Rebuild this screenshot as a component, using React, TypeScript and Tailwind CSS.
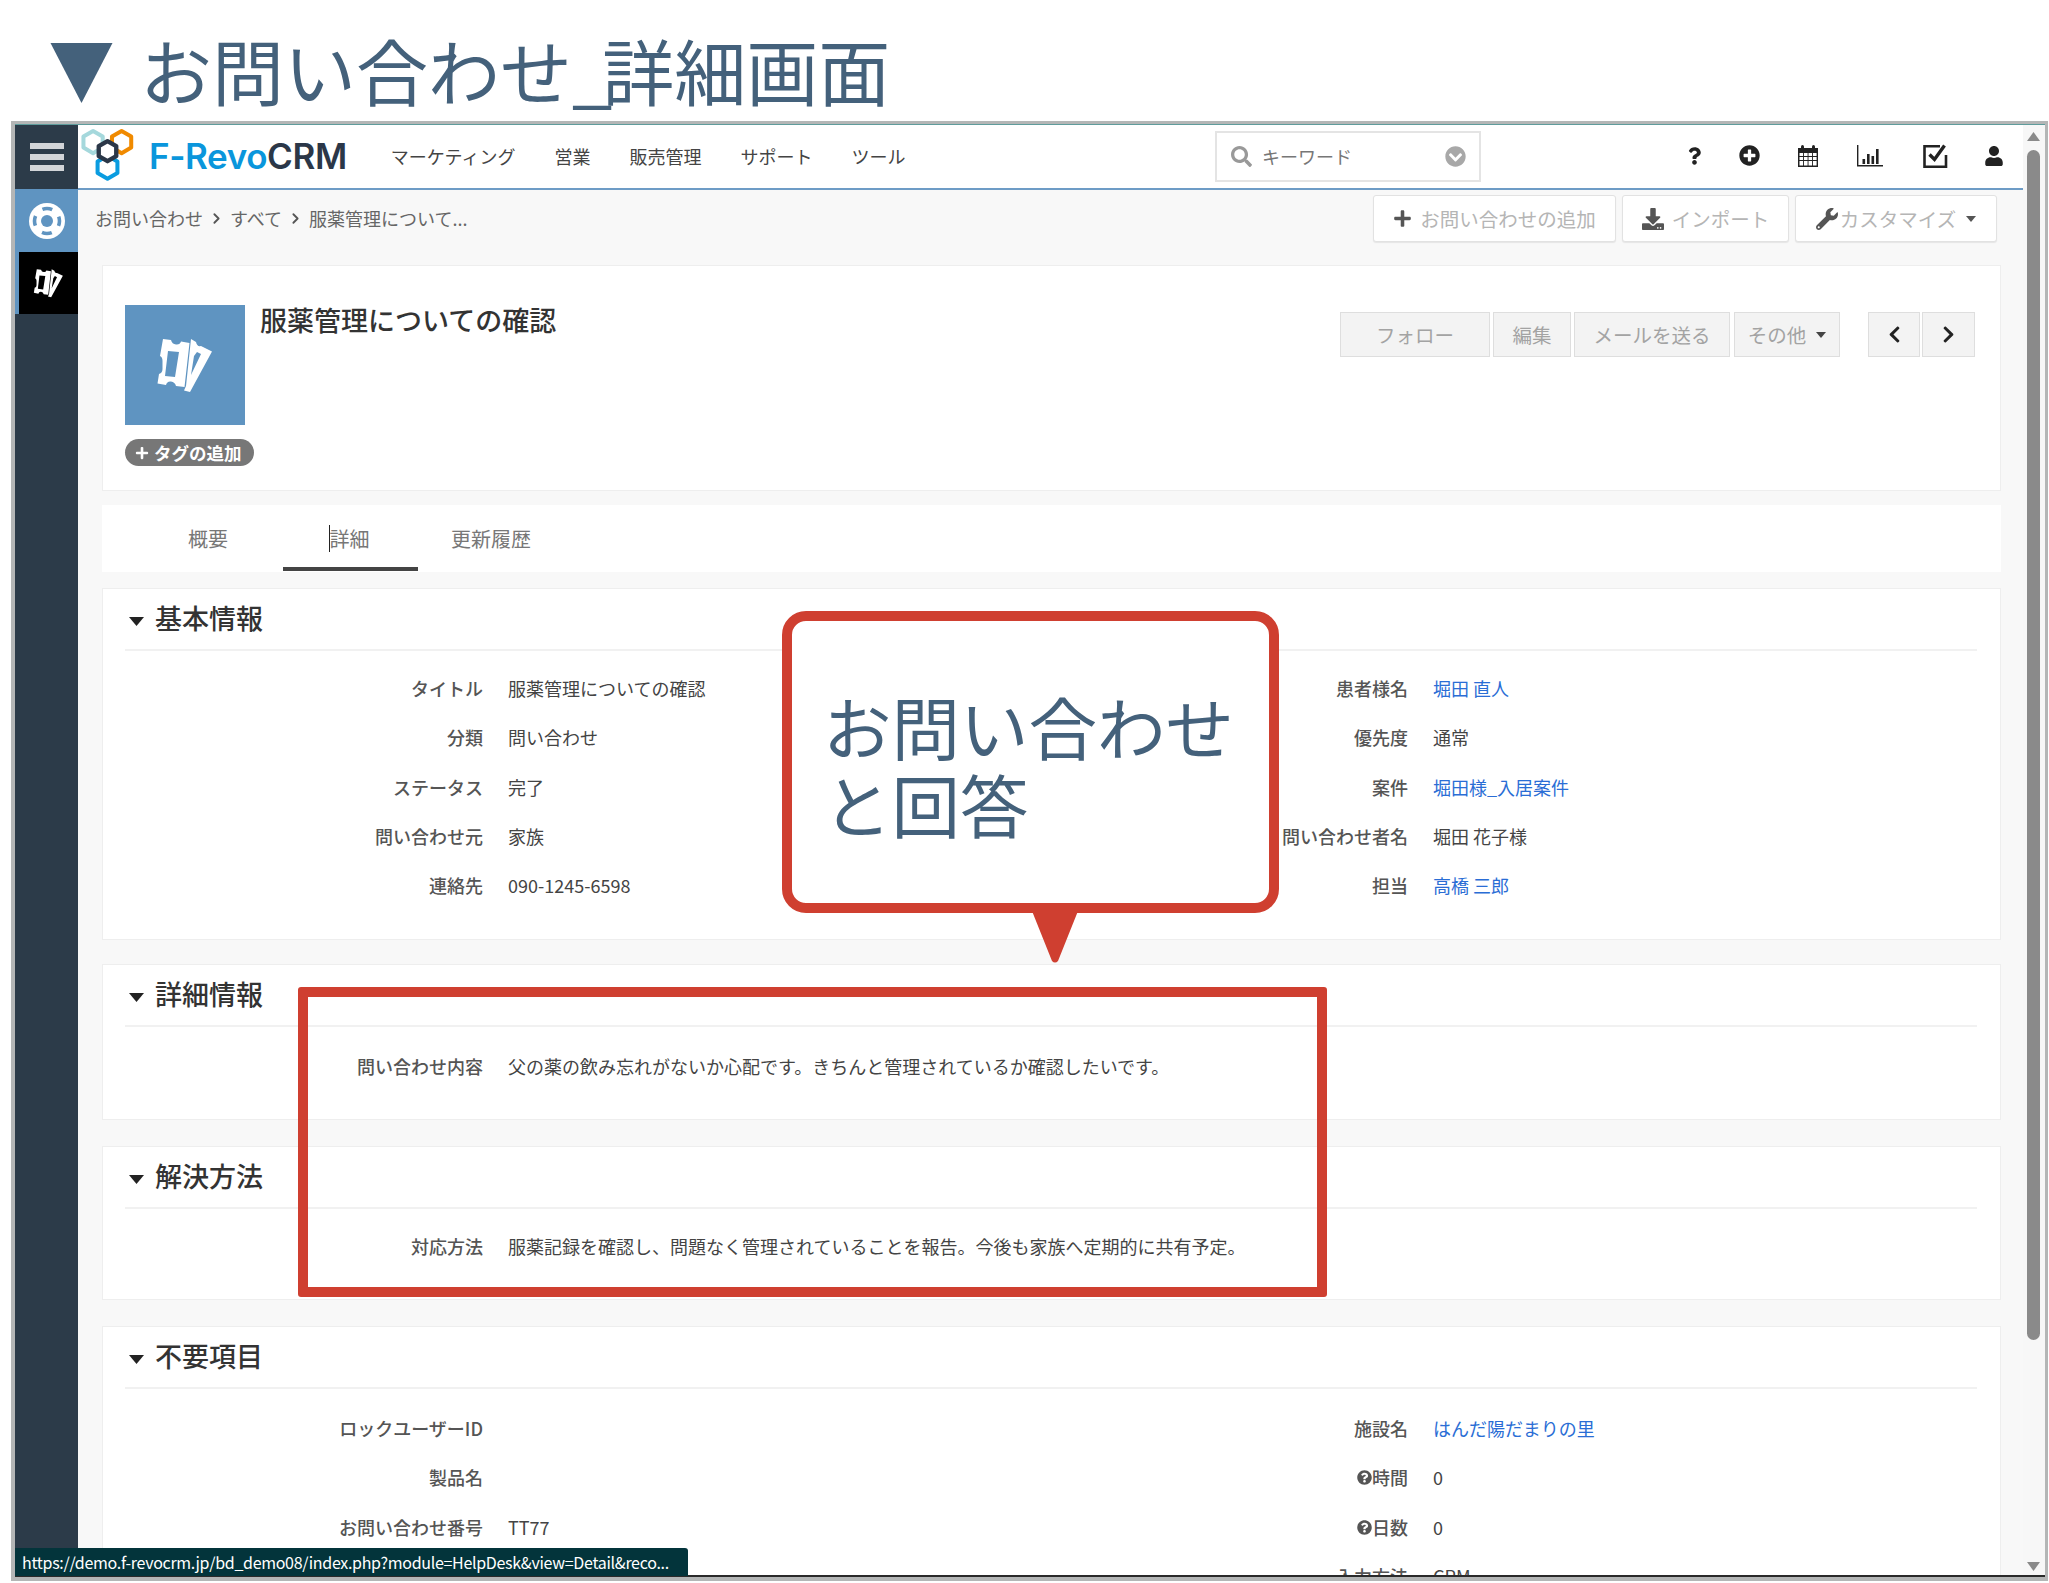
import type { ReactNode } from 'react';
import {
  FaChevronCircleDown,
  FaChevronLeft,
  FaChevronRight,
  FaDownload,
  FaPlus,
  FaPlusCircle,
  FaQuestion,
  FaQuestionCircle,
  FaSearch,
  FaUser,
  FaWrench,
} from 'react-icons/fa';
import { ChevronRight } from 'lucide-react';

function Hex({ cx, cy, r, stroke, fill = 'none', w = 12 }: { cx: number; cy: number; r: number; stroke: string; fill?: string; w?: number }) {
  const dx = r * 0.87;
  const pts = `${cx},${cy - r} ${cx + dx},${cy - r / 2} ${cx + dx},${cy + r / 2} ${cx},${cy + r} ${cx - dx},${cy + r / 2} ${cx - dx},${cy - r / 2}`;
  return <polygon points={pts} stroke={stroke} fill={fill} strokeWidth={w} strokeLinejoin="round" />;
}

function Logo() {
  return (
    <svg viewBox="236 50 164 164" className="w-[55px] h-[55px] shrink-0">
      <Hex cx={275} cy={92} r={33} stroke="#a5d8dc" />
      <Hex cx={360} cy={92} r={33} stroke="#f08a00" />
      <Hex cx={318} cy={167} r={34} stroke="#0a9ce0" />
      <Hex cx={318} cy={119} r={30} stroke="#2b3748" fill="#ffffff" w={13} />
    </svg>
  );
}

// two tilted tickets, the helpdesk module icon
function TicketIcon({ className }: { className?: string }) {
  return (
    <svg viewBox="30 28 62 60" className={className} fill="currentColor" fillRule="evenodd">
      <path d="M39 32L47 33Q48 37 52 37.5Q56 38 57 34.5L65.5 36L60.5 80L52 79Q51 75 47 74.5Q43 74 42 78L33.5 76.5L35 67Q38.5 66 38.5 62V54Q38.5 50 36 49ZM44 44L41 69L51 70L55 45Z" />
      <path d="M67 32L72 35Q73 40 77 39L88 44.5L66 85L60 83.5L62 79ZM70 49L67 68L77 47L73 45Z" />
    </svg>
  );
}

function LifeRingIcon() {
  return (
    <svg viewBox="-18 -18 36 36" className="w-[36px] h-[36px]">
      <circle r="18" fill="#ffffff" />
      <circle r="12.5" fill="none" stroke="#5f94c1" strokeWidth="3.6" strokeDasharray="10 9.63" strokeDashoffset="5" />
      <circle r="6" fill="#5f94c1" />
    </svg>
  );
}

function CalendarIcon() {
  return (
    <svg viewBox="0 0 22 24" className="w-[22px] h-[24px]">
      <path fill="#222" d="M1 4h20v19H1z" />
      <rect x="4" y="1" width="3" height="6" rx="1.5" fill="#222" />
      <rect x="15" y="1" width="3" height="6" rx="1.5" fill="#222" />
      <path fill="#fff" d="M2.5 9h3.6v3H2.5zM7 9h3.6v3H7zM11.5 9h3.6v3h-3.6zM16 9h3.6v3H16zM2.5 13h3.6v3H2.5zM7 13h3.6v3H7zM11.5 13h3.6v3h-3.6zM16 13h3.6v3H16zM2.5 17h3.6v4.5H2.5zM7 17h3.6v4.5H7zM11.5 17h3.6v4.5h-3.6zM16 17h3.6v4.5H16z" />
    </svg>
  );
}

function ChartIcon() {
  return (
    <svg viewBox="0 0 28 22" className="w-[28px] h-[22px]" fill="#222">
      <path d="M1 0h1.4v20H27v1.4H1z" />
      <path d="M6.5 14h2.6v5H6.5zM11 9h2.6v10H11zM15.5 11h2.6v8h-2.6zM20 4h2.6v15H20z" />
    </svg>
  );
}

function CheckBoxIcon() {
  return (
    <svg viewBox="0 0 25 24" className="w-[25px] h-[24px]" fill="none" stroke="#222">
      <path strokeWidth="2.6" d="M17 2.3H1.5V22.7H23V11" />
      <path strokeWidth="3.4" d="M6.5 10.5L11.5 15.5L21.5 1.5" />
    </svg>
  );
}

function Btn({ children, className }: { children: ReactNode; className: string }) {
  return (
    <div className={`h-[47px] flex items-center justify-center gap-2 bg-white border border-[#e2e2e2] rounded-[3px] shadow-[0_1px_1px_#e5e5e5] text-[19.5px] text-[#b5b5b5] whitespace-nowrap ${className}`}>
      {children}
    </div>
  );
}

function ActionBtn({ children, className }: { children: ReactNode; className: string }) {
  return (
    <div className={`h-[45px] flex items-center justify-center gap-2 bg-[#f3f3f3] border border-[#dedede] text-[19.5px] text-[#a3a3a3] whitespace-nowrap ${className}`}>
      {children}
    </div>
  );
}

function Caret({ className = '' }: { className?: string }) {
  return (
    <svg viewBox="0 0 10 6" className={`w-[10px] h-[6px] ${className}`} fill="currentColor">
      <path d="M0 0h10L5 6z" />
    </svg>
  );
}

function Field({ label, value, link, help }: { label: string; value?: string; link?: boolean; help?: boolean }) {
  return (
    <div className="flex items-center text-[18px] h-[49.3px]">
      <div className="w-[380px] flex items-center justify-end font-medium text-[#555]">
        {help && <FaQuestionCircle className="w-[15px] h-[15px] text-[#555]" />}
        {label}
      </div>
      <div className={`ml-[25px] ${link ? 'text-[#2a6dd5]' : 'text-[#444]'}`}>{value}</div>
    </div>
  );
}

function Section({ title, top, height, children }: { title: string; top: string; height: string; children: ReactNode }) {
  return (
    <section className={`bg-white border border-[#eeeeee] ${height} ${top}`}>
      <div className="mx-[22px] mr-[23px] h-[62px] pb-[3px] border-b-2 border-[#f1f1f1] flex items-center">
        <Caret className="w-[15px] h-[9px] ml-[4px] mt-[7px] text-[#222]" />
        <h2 className="ml-[11px] text-[27px] font-medium text-[#333] leading-none">{title}</h2>
      </div>
      {children}
    </section>
  );
}

export default function App() {
  return (
    <div className="relative w-[2049px] h-[1583px] bg-white overflow-hidden font-['Noto_Sans_CJK_JP','Noto_Sans',sans-serif]">
      {/* page title */}
      <div className="h-[121px] flex items-start pl-[50px] pt-[43px]">
        <svg viewBox="0 0 62 60" className="w-[63px] h-[60px] shrink-0" fill="#44617b">
          <path d="M0 0h62L31 60z" />
        </svg>
        <h1 className="ml-[27px] -mt-[18px] text-[72px] leading-[88px] text-[#44617b] whitespace-nowrap">
          お問い合わせ<span className="tracking-[-13px]">_</span>
          <span className="ml-[3px]">詳細画面</span>
        </h1>
      </div>

      {/* browser frame */}
      <div className="ml-[11px] w-[2037px] h-[1460px] border-[#b4b6b6] border-l-4 border-t-[3px] border-r-[3px] border-b-4 flex flex-col">
        <div className="flex-1 min-h-0 flex border-t border-b-2 border-t-[#5f9c9c] border-b-[#2a2a2a]">
          {/* sidebar */}
          <aside className="w-[63px] shrink-0 bg-[#2c3b49] flex flex-col">
            <div className="h-[64px] flex flex-col items-center justify-center gap-[5px]">
              <div className="w-[34px] h-[6px] bg-[#d2d5d8]" />
              <div className="w-[34px] h-[6px] bg-[#d2d5d8]" />
              <div className="w-[34px] h-[6px] bg-[#d2d5d8]" />
            </div>
            <div className="h-[63px] bg-[#5f94c1] flex items-center justify-center">
              <LifeRingIcon />
            </div>
            <div className="h-[62px] bg-[#5f94c1] pl-[4px]">
              <div className="h-full bg-black flex items-center justify-center text-white">
                <TicketIcon className="w-[33px] h-[32px]" />
              </div>
            </div>
          </aside>

          {/* page */}
          <main className="relative w-[1945px] shrink-0 bg-[#f8f8f8] overflow-hidden">
            <header className="h-[65px] bg-white border-b-2 border-[#6d9cc6] flex items-center">
              <div className="ml-[2px] -mt-[2px]"><Logo /></div>
              <div className="ml-[14px] text-[35px] font-semibold tracking-[-0.4px] leading-none font-['Inter',sans-serif]">
                <span className="text-[#0a96dc]">F-Revo</span>
                <span className="text-[#2b3748]">CRM</span>
              </div>
              <nav className="ml-[44px] flex gap-[39px] text-[18px] text-[#444]">
                <span>マーケティング</span>
                <span>営業</span>
                <span>販売管理</span>
                <span>サポート</span>
                <span>ツール</span>
              </nav>
              <div className="absolute left-[1137px] top-[6px] w-[266px] h-[51px] border-2 border-[#e4e4e4] flex items-center pl-[14px] text-[18px] text-[#777]">
                <FaSearch className="w-[21px] h-[21px] text-[#999]" />
                <span className="ml-[10px]">キーワード</span>
                <FaChevronCircleDown className="ml-auto mr-[13px] w-[21px] h-[21px] text-[#a8a8a8]" />
              </div>
              <div className="absolute left-[1610px] top-[0px] h-[61px] flex items-center text-[#222]">
                <FaQuestion className="w-[13px] h-[18px]" />
                <FaPlusCircle className="ml-[38px] w-[21px] h-[21px]" />
                <div className="ml-[37px]"><CalendarIcon /></div>
                <div className="ml-[37px]"><ChartIcon /></div>
                <div className="ml-[39px]"><CheckBoxIcon /></div>
                <FaUser className="ml-[36px] w-[20px] h-[20px]" />
              </div>
            </header>

            <div className="h-[75px] flex items-start">
              <div className="mt-[15px] ml-[17px] flex items-center text-[18px] text-[#666] leading-[27px]">
                <span>お問い合わせ</span>
                <ChevronRight strokeWidth={2.6} className="w-[17px] h-[17px] mx-[5px] text-[#555]" />
                <span>すべて</span>
                <ChevronRight strokeWidth={2.6} className="w-[17px] h-[17px] mx-[5px] text-[#555]" />
                <span>服薬管理について...</span>
              </div>
              <div className="ml-auto mr-[26px] mt-[5px] flex gap-[6px]">
                <Btn className="w-[243px]">
                  <FaPlus className="w-[19px] h-[19px] text-[#555]" />
                  <span>お問い合わせの追加</span>
                </Btn>
                <Btn className="w-[167px]">
                  <FaDownload className="w-[22px] h-[22px] text-[#555]" />
                  <span>インポート</span>
                </Btn>
                <Btn className="w-[202px] gap-[2px]">
                  <FaWrench className="w-[22px] h-[22px] text-[#555]" />
                  <span>カスタマイズ</span>
                  <Caret className="ml-[8px] text-[#555]" />
                </Btn>
              </div>
            </div>

            <div className="ml-[24px] mr-[22px] flex flex-col">
              {/* record header */}
              <div className="h-[226px] bg-white border border-[#eeeeee] flex">
                <div className="ml-[22px] mt-[39px] flex flex-col">
                  <div className="w-[120px] h-[120px] bg-[#5f94c1] flex items-center justify-center text-white">
                    <TicketIcon className="w-[62px] h-[60px]" />
                  </div>
                  <div className="mt-[14px] w-[129px] h-[27px] rounded-full bg-[#777] flex items-center pl-[10px] gap-[5px] text-[17.5px] font-bold text-white leading-none whitespace-nowrap">
                    <FaPlus className="w-[14px] h-[14px] shrink-0" />
                    タグの追加
                  </div>
                </div>
                <h1 className="ml-[14px] mt-[35px] text-[27px] leading-[38px] font-medium text-[#333] -translate-x-[8px]">服薬管理についての確認</h1>
                <div className="ml-auto mr-[25px] mt-[46px] flex">
                  <ActionBtn className="w-[150px]">フォロー</ActionBtn>
                  <ActionBtn className="ml-[3px] w-[78px]">編集</ActionBtn>
                  <ActionBtn className="ml-[3px] w-[156px]">メールを送る</ActionBtn>
                  <ActionBtn className="ml-[4px] w-[106px]">
                    その他 <Caret className="ml-[2px] text-[#444]" />
                  </ActionBtn>
                  <ActionBtn className="ml-[28px] w-[52px]">
                    <FaChevronLeft className="w-[15px] h-[19px] text-[#222]" />
                  </ActionBtn>
                  <ActionBtn className="ml-[2px] w-[53px]">
                    <FaChevronRight className="w-[15px] h-[19px] text-[#222]" />
                  </ActionBtn>
                </div>
              </div>

              {/* tabs */}
              <div className="mt-[14px] h-[67px] bg-white flex text-[20px] text-[#777]">
                <div className="w-[181px] pl-[86px] pt-[17px] leading-[34px]">概要</div>
                <div className="relative w-[135px] h-[66px] border-b-4 border-[#444] pt-[17px] pr-[2px] text-center leading-[34px]">
                  <span className="absolute left-[46px] top-[20px] w-[1px] h-[27px] bg-[#222]" />
                  詳細
                </div>
                <div className="ml-[33px] pt-[17px] leading-[34px]">更新履歴</div>
              </div>

              <Section title="基本情報" top="mt-[16px]" height="h-[352px]">
                <div className="grid grid-cols-[925px_1fr] pt-[13px]">
                  <div>
                    <Field label="タイトル" value="服薬管理についての確認" />
                    <Field label="分類" value="問い合わせ" />
                    <Field label="ステータス" value="完了" />
                    <Field label="問い合わせ元" value="家族" />
                    <Field label="連絡先" value="090-1245-6598" />
                  </div>
                  <div>
                    <Field label="患者様名" value="堀田 直人" link />
                    <Field label="優先度" value="通常" />
                    <Field label="案件" value="堀田様_入居案件" link />
                    <Field label="問い合わせ者名" value="堀田 花子様" />
                    <Field label="担当" value="高橋 三郎" link />
                  </div>
                </div>
              </Section>

              <Section title="詳細情報" top="mt-[24px]" height="h-[156px]">
                <div className="pt-[15px]">
                  <Field label="問い合わせ内容" value="父の薬の飲み忘れがないか心配です。きちんと管理されているか確認したいです。" />
                </div>
              </Section>

              <Section title="解決方法" top="mt-[26px]" height="h-[154px]">
                <div className="pt-[13px]">
                  <Field label="対応方法" value="服薬記録を確認し、問題なく管理されていることを報告。今後も家族へ定期的に共有予定。" />
                </div>
              </Section>

              <Section title="不要項目" top="mt-[26px]" height="h-[300px]">
                <div className="grid grid-cols-[925px_1fr] pt-[15px]">
                  <div>
                    <Field label="ロックユーザーID" />
                    <Field label="製品名" />
                    <Field label="お問い合わせ番号" value="TT77" />
                  </div>
                  <div>
                    <Field label="施設名" value="はんだ陽だまりの里" link />
                    <Field label="時間" value="0" help />
                    <Field label="日数" value="0" help />
                    <Field label="入力方法" value="CRM" />
                  </div>
                </div>
              </Section>
            </div>
          </main>

          {/* scrollbar */}
          <div className="flex-1 bg-[#f7f7f7] flex flex-col items-start pl-[4px] pt-[7px] pb-[4px]">
            <svg viewBox="0 0 13 9" className="w-[13px] h-[9px] text-[#8a8a8a]" fill="currentColor">
              <path d="M6.5 0L13 9H0z" />
            </svg>
            <div className="mt-[9px] w-[13px] h-[1190px] rounded-full bg-[#8a8a8a]" />
            <svg viewBox="0 0 13 9" className="mt-auto w-[13px] h-[9px] text-[#8a8a8a]" fill="currentColor">
              <path d="M0 0h13L6.5 9z" />
            </svg>
          </div>
        </div>
      </div>

      {/* status bar of the browser */}
      <div className="absolute left-[15px] top-[1548px] w-[673px] h-[28px] bg-[#03343b] rounded-tr-[3px] pl-[7px] text-[16px] tracking-[-0.3px] leading-[28px] text-white whitespace-nowrap overflow-hidden">
        https://demo.f-revocrm.jp/bd_demo08/index.php?module=HelpDesk&amp;view=Detail&amp;reco...
      </div>

      {/* annotation: speech bubble */}
      <div className="absolute left-[782px] top-[611px] w-[497px] h-[302px] bg-white border-[10px] border-[#cf3f30] rounded-[24px] pl-[31px] pt-[66px] text-[68.5px] leading-[78px] text-[#44617b] whitespace-nowrap">
        お問い合わせ
        <br />
        と回答
      </div>
      <svg viewBox="0 0 46 52" className="absolute left-[1032px] top-[911px] w-[46px] h-[52px]" fill="#cf3f30">
        <path d="M0 0h46L26 50q-3 3-6 0z" />
      </svg>

      {/* annotation: highlight frame */}
      <div className="absolute left-[298px] top-[987px] w-[1029px] h-[310px] border-[10px] border-[#cf3f30] rounded-[3px]" />
    </div>
  );
}
